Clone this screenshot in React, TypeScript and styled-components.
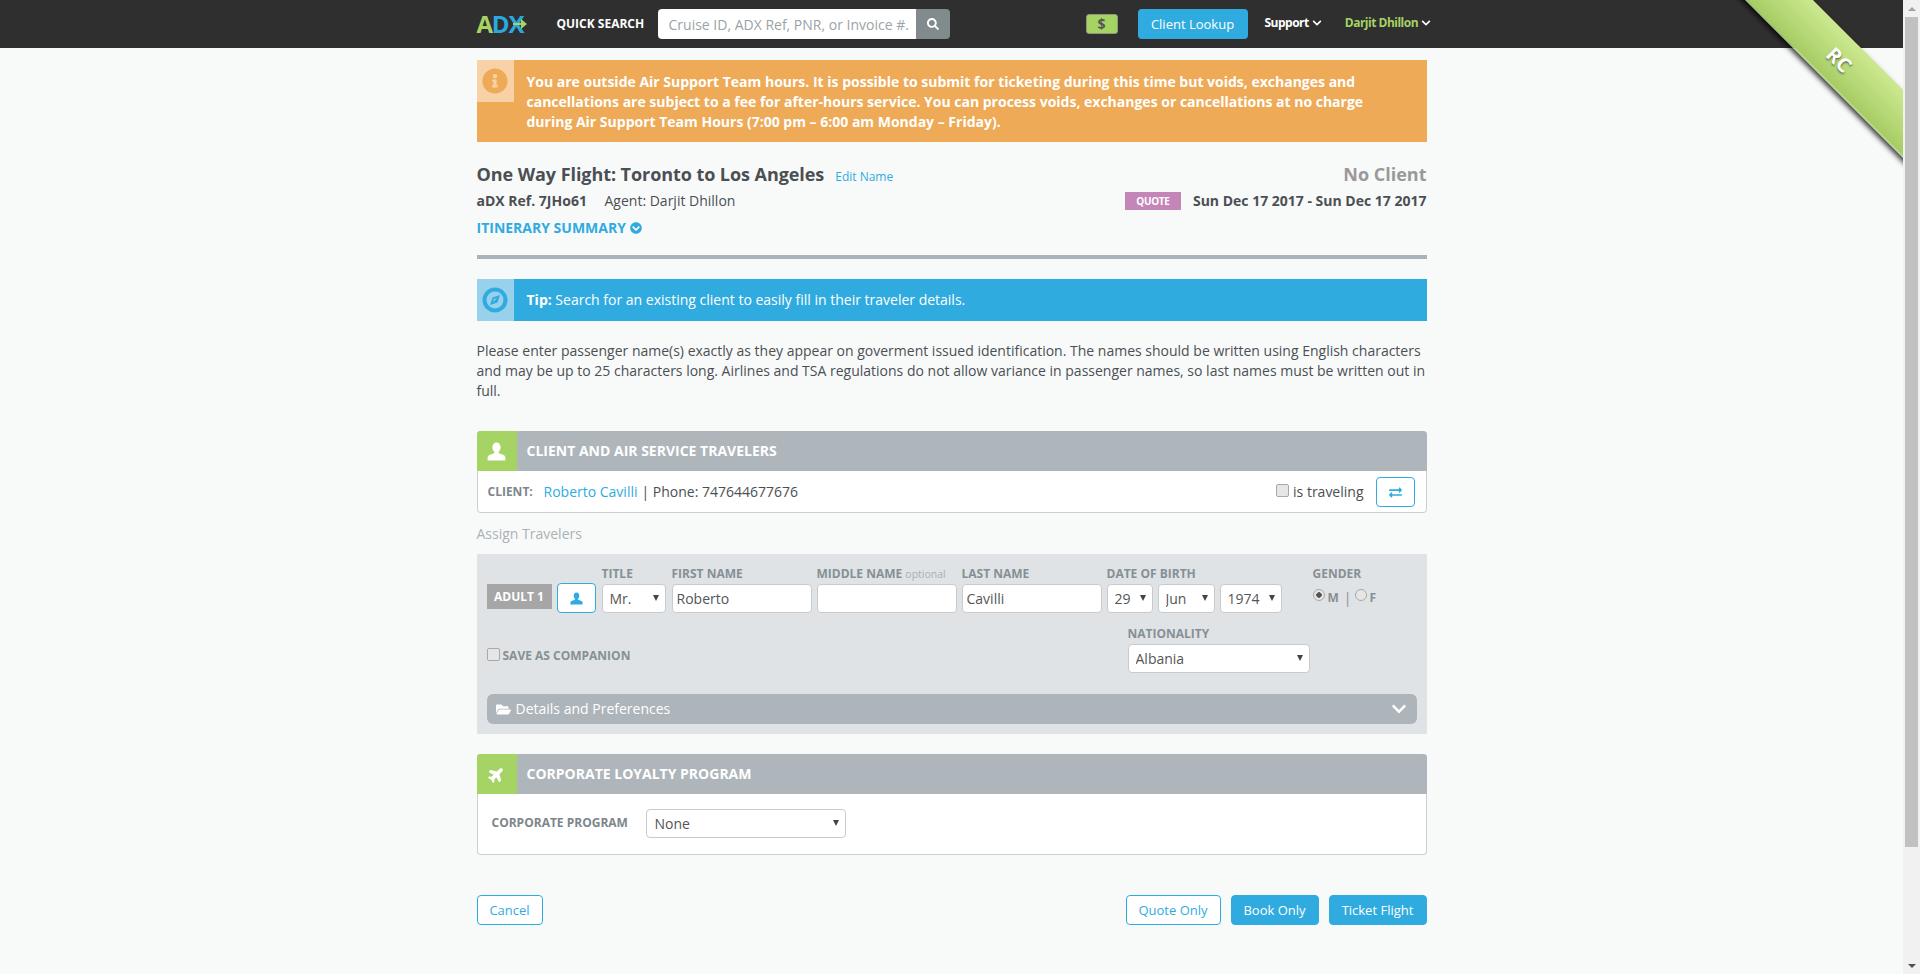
import { FC, ReactNode } from "react";
import styled, { createGlobalStyle } from "styled-components";
import {
  FaChevronCircleDown,
  FaChevronDown,
  FaExchangeAlt,
  FaFolderOpen,
  FaInfoCircle,
  FaPlane,
  FaSearch,
} from "react-icons/fa";

const BLUE = "#2fabdf";
const GREEN = "#a5d364";

const GlobalStyle = createGlobalStyle`
  html, body {
    margin: 0;
    padding: 0;
    height: 100%;
    overflow: hidden;
  }
  body {
    background: #f8fafa;
    color: #4b4f54;
    font-family: "Open Sans", "Liberation Sans", sans-serif;
    font-size: 14px;
    line-height: 20px;
  }
`;

const Shell = styled.div`
  display: flex;
  height: 974px;
  overflow: hidden;
`;

const Page = styled.div`
  position: relative;
  flex: 1;
  min-width: 0;
  overflow: hidden;
`;

const ScrollRail = styled.div`
  flex: 0 0 17px;
  display: flex;
  flex-direction: column;
  background: #f1f1f1;
`;

const ScrollArrow = styled.div<{ $down?: boolean }>`
  flex: 0 0 17px;
  display: flex;
  align-items: center;
  justify-content: center;

  &::before {
    content: "";
    border-left: 4px solid transparent;
    border-right: 4px solid transparent;
    ${(p) => (p.$down ? "border-top: 4px solid #505050;" : "border-bottom: 4px solid #a3a3a3;")}
  }
`;

const ScrollThumb = styled.div`
  flex: 0 0 830px;
  margin: 0 2px;
  background: #c1c1c1;
`;

const ScrollSpace = styled.div`
  flex: 1;
`;

const TopBar = styled.header`
  background: #2f2f2f;
  height: 48px;
`;

const Container = styled.div`
  width: 950px;
  margin: 0 auto;
`;

const TopBarInner = styled(Container)`
  display: flex;
  align-items: center;
  height: 48px;
`;

const Logo = styled.div`
  position: relative;
  flex: 0 0 80px;
  font-size: 24px;
  font-weight: 700;
  letter-spacing: -1.2px;
  line-height: 48px;
  color: #2aa9e0;

  span {
    color: ${GREEN};
  }
  svg {
    position: absolute;
    left: 36px;
    top: 18px;
  }
`;

const QuickLabel = styled.div`
  flex: 0 0 101px;
  color: #fff;
  font-size: 12px;
  font-weight: 700;
  white-space: nowrap;
`;

const SearchGroup = styled.div`
  display: flex;
  flex: 0 0 292px;
  height: 30px;
`;

const SearchInput = styled.input`
  flex: 1;
  min-width: 0;
  border: 0;
  border-radius: 4px 0 0 4px;
  background: #fff;
  padding: 0 0 0 11px;
  font: 14px "Open Sans", sans-serif;
  color: #555;

  &::placeholder {
    color: #9aa3a8;
    opacity: 1;
  }
`;

const SearchButton = styled.button`
  flex: 0 0 34px;
  border: 0;
  padding: 0;
  border-radius: 0 4px 4px 0;
  background: #818b8e;
  color: #fff;
  font-size: 12px;
  display: flex;
  align-items: center;
  justify-content: center;
`;

const MoneyBadge = styled.div`
  flex: 0 0 32px;
  margin-left: 136px;
  height: 20px;
  box-sizing: border-box;
  border: 1px solid #8b9a78;
  border-radius: 3px;
  background: ${GREEN};
  color: #555;
  font-size: 14px;
  font-weight: 700;
  line-height: 18px;
  text-align: center;
`;

const LookupButton = styled.button`
  flex: 0 0 110px;
  margin-left: 20px;
  height: 30px;
  border: 0;
  border-radius: 4px;
  padding: 0;
  background: ${BLUE};
  color: #fff;
  font: 13px "Open Sans", sans-serif;
`;

const NavMenu = styled.div<{ $color: string; $gap: number }>`
  display: flex;
  align-items: center;
  flex: none;
  margin-left: ${(p) => p.$gap}px;
  margin-top: -2px;
  color: ${(p) => p.$color};
  font-size: 12px;
  font-weight: 700;
  letter-spacing: -0.5px;
  white-space: nowrap;

  svg {
    color: #fff;
    font-size: 10px;
    margin-left: 3px;
  }
`;

const Ribbon = styled.div`
  position: absolute;
  top: 0;
  right: 0;
  width: 175px;
  height: 175px;
  overflow: hidden;
  pointer-events: none;
`;

const RibbonBand = styled.div`
  position: absolute;
  left: -39px;
  top: 36px;
  width: 300px;
  height: 48px;
  box-sizing: border-box;
  transform: rotate(45deg);
  background: linear-gradient(to bottom, #cde990, #a6cc64);
  border-bottom: 1px solid #bcdca0;
  box-shadow: 0 3px 5px rgba(0, 0, 0, 0.75);
  color: #fff;
  font-size: 20px;
  font-weight: 700;
  line-height: 48px;
  text-align: center;
  text-shadow: 1px 1px 2px rgba(0, 0, 0, 0.5);
`;

const Notice = styled.div<{ $bg: string }>`
  display: flex;
  background: ${(p) => p.$bg};
  color: #fff;
`;

const NoticeIcon = styled.div<{ $bg: string; $color: string; $size: number }>`
  flex: 0 0 37px;
  height: 42px;
  display: flex;
  align-items: center;
  justify-content: center;
  background: ${(p) => p.$bg};
  color: ${(p) => p.$color};
  font-size: ${(p) => p.$size}px;
`;

const AlertText = styled.div`
  padding: 12px 40px 10px 13px;
  font-weight: 700;
`;

const TipText = styled.div`
  padding: 11px 13px;

  b {
    font-weight: 700;
  }
`;

const Alert = styled(Notice)`
  margin-top: 12px;
`;

const Tip = styled(Notice)`
  margin-top: 20px;
`;

const TripHead = styled.div`
  display: flex;
  justify-content: space-between;
  margin-top: 20px;
`;

const TripTitle = styled.div`
  display: flex;
  align-items: baseline;
`;

const TitleText = styled.div`
  font-size: 18px;
  font-weight: 700;
  letter-spacing: -0.065px;
  line-height: 24px;
`;

const EditLink = styled.a`
  margin-left: 11px;
  font-size: 12px;
  color: ${BLUE};
`;

const NoClient = styled.div`
  font-size: 18px;
  font-weight: 700;
  line-height: 24px;
  color: #999;
`;

const TripMeta = styled.div`
  display: flex;
  justify-content: space-between;
  align-items: center;
  margin-top: 4px;
`;

const RefGroup = styled.div`
  display: flex;

  b {
    font-weight: 700;
    width: 128px;
  }
`;

const DateGroup = styled.div`
  display: flex;
  align-items: center;
  font-weight: 700;
`;

const StatusTag = styled.span`
  width: 56px;
  height: 18px;
  margin-right: 12px;
  background: #c485b7;
  color: #fff;
  font-size: 10px;
  font-weight: 700;
  line-height: 18px;
  letter-spacing: -0.3px;
  text-align: center;
`;

const SummaryLink = styled.a`
  display: flex;
  align-items: center;
  gap: 4px;
  margin-top: 7px;
  color: ${BLUE};
  font-weight: 700;
  line-height: 20px;

  svg {
    font-size: 12px;
  }
`;

const Rule = styled.div`
  height: 4px;
  margin-top: 17px;
  background: #aab3b8;
`;

const Intro = styled.p`
  margin: 20px 0 30px;
`;

const Panel = styled.section`
  background: #fff;
  border: 1px solid #ccd0d3;
  border-top: 0;
  border-radius: 4px;
`;

const PanelHead = styled.div`
  display: flex;
  align-items: center;
  height: 40px;
  margin: 0 -1px;
  background: #aeb5bb;
  border-radius: 4px 4px 0 0;
  color: #fff;
  font-weight: 700;
  overflow: hidden;
`;

const PanelIcon = styled.div`
  flex: 0 0 40px;
  height: 40px;
  margin-right: 10px;
  display: flex;
  align-items: center;
  justify-content: center;
  background: ${GREEN};
  font-size: 17px;
`;

const PlaneIcon = styled(FaPlane)`
  transform: rotate(-45deg);
`;

const ClientRow = styled.div`
  display: flex;
  align-items: center;
  height: 41px;
  box-sizing: border-box;
  padding: 1px 11px 0 10px;
`;

const ClientLabel = styled.span`
  width: 56px;
  color: #7d868b;
  font-size: 12px;
  font-weight: 700;
`;

const BlueLink = styled.a`
  color: ${BLUE};
  margin-right: 4px;
`;

const Spacer = styled.div`
  flex: 1;
`;

const Check = styled.input`
  appearance: none;
  flex: none;
  width: 13px;
  height: 13px;
  margin: 0;
  box-sizing: border-box;
  border: 1px solid #a9a9a9;
  border-radius: 2px;
  background: #e6e6e6;
`;

const TravelingLabel = styled.label`
  display: flex;
  align-items: center;
  gap: 4px;
  margin-right: 12px;

  input {
    margin-top: -3px;
  }
`;

const OutlineIconButton = styled.button`
  flex: 0 0 39px;
  height: 30px;
  padding: 0;
  box-sizing: border-box;
  border: 1px solid ${BLUE};
  border-radius: 4px;
  background: #fff;
  color: ${BLUE};
  font-size: 13px;
  display: flex;
  align-items: center;
  justify-content: center;
`;

const AssignTitle = styled.div`
  margin: 11px 0 10px;
  color: #aab1b6;
`;

const TravelerForm = styled.div`
  background: #dfe3e6;
  padding: 11px 10px 10px;
`;

const FieldRow = styled.div`
  display: flex;
  align-items: flex-end;
`;

const AdultTag = styled.div`
  flex: 0 0 65px;
  height: 25px;
  margin: 0 5px 4px 0;
  background: #a6a6a6;
  color: #fff;
  font-size: 12px;
  font-weight: 700;
  line-height: 25px;
  text-align: center;
`;

const ProfileButton = styled(OutlineIconButton)`
  margin-right: 6px;
`;

const Field = styled.div<{ $width: number; $gap?: number }>`
  flex: 0 0 ${(p) => p.$width}px;
  min-width: 0;
  margin-right: ${(p) => p.$gap ?? 5}px;
`;

const FieldLabel = styled.div`
  height: 19px;
  color: #869094;
  font-size: 12px;
  font-weight: 700;
  line-height: 18px;
  white-space: nowrap;

  small {
    color: #a9b0b4;
    font-size: 10.5px;
    font-weight: 400;
  }
`;

const TextInput = styled.input`
  display: block;
  width: 100%;
  height: 29px;
  box-sizing: border-box;
  border: 1px solid #c8cbcd;
  border-radius: 4px;
  background: #fff;
  padding: 0 4px;
  color: #555;
  font: 14px "Open Sans", sans-serif;
`;

const SelectWrap = styled.div`
  position: relative;

  &::after {
    content: "";
    position: absolute;
    right: 7px;
    top: 11px;
    border-left: 3.5px solid transparent;
    border-right: 3.5px solid transparent;
    border-top: 6px solid #444;
    pointer-events: none;
  }
`;

const SelectBox = styled.select`
  appearance: none;
  display: block;
  width: 100%;
  height: 29px;
  box-sizing: border-box;
  border: 1px solid #c8cbcd;
  border-radius: 4px;
  background: #fff;
  padding: 0 0 0 7px;
  color: #555;
  font: 14px "Open Sans", sans-serif;
`;

const Dropdown: FC<{ value: string }> = ({ value }) => (
  <SelectWrap>
    <SelectBox defaultValue={value}>
      <option>{value}</option>
    </SelectBox>
  </SelectWrap>
);

const GenderRow = styled.div`
  display: flex;
  align-items: center;
  height: 29px;
  margin-top: -1px;
  color: #869094;
  font-size: 12px;
  font-weight: 700;

  i {
    font-style: normal;
    font-weight: 400;
    font-size: 14px;
    margin: 0 3px 0 5px;
  }
`;

const Radio = styled.input`
  appearance: none;
  width: 12px;
  height: 12px;
  margin: -5px 3px 0 0;
  box-sizing: border-box;
  border: 1px solid #a9a9a9;
  border-radius: 50%;
  background: #e6e6e6;

  &:checked {
    background: radial-gradient(circle, #555 0 2.5px, #e6e6e6 3px);
  }
`;

const GenderField = styled(Field)`
  align-self: flex-start;
`;

const ExtrasRow = styled.div`
  display: flex;
  justify-content: space-between;
  margin-top: 12px;
  padding-right: 107px;
`;

const CompanionLabel = styled.label`
  display: flex;
  align-items: center;
  gap: 3px;
  margin-top: 21px;
  height: 20px;
  color: #869094;
  font-size: 12px;
  font-weight: 700;

  input {
    margin-top: -3px;
  }
`;

const DetailsBar = styled.div`
  display: flex;
  align-items: center;
  gap: 5px;
  height: 30px;
  margin-top: 21px;
  padding: 0 10px 0 9px;
  border-radius: 6px;
  background: #adb4ba;
  color: #fff;

  svg:first-child {
    font-size: 15px;
  }
  svg:last-child {
    margin-left: auto;
    font-size: 16px;
  }
`;

const CorporatePanel = styled(Panel)`
  margin-top: 20px;
`;

const CorporateRow = styled.div`
  display: flex;
  align-items: center;
  padding: 15px 15px 16px 14px;
`;

const CorporateLabel = styled.div`
  flex: 0 0 154px;
  margin-top: -2px;
  color: #7d868b;
  font-size: 12px;
  font-weight: 700;
`;

const CorporateField = styled.div`
  flex: 0 0 200px;

  select {
    padding-left: 8px;
  }
`;

const Actions = styled.div`
  display: flex;
  gap: 10px;
  margin-top: 40px;
`;

const ActionButton = styled.button<{ $solid?: boolean; $width: number }>`
  flex: 0 0 ${(p) => p.$width}px;
  height: 30px;
  box-sizing: border-box;
  padding: 0;
  border: 1px solid ${BLUE};
  border-radius: 4px;
  background: ${(p) => (p.$solid ? BLUE : "#fff")};
  color: ${(p) => (p.$solid ? "#fff" : BLUE)};
  font: 13px "Open Sans", sans-serif;
`;

const UserGlyph: FC<{ size: number }> = ({ size }) => (
  <svg width={size} height={size} viewBox="0 0 16 15" fill="currentColor">
    <path d="M8 0C5.8 0 4.5 1.8 4.5 4c0 1.6.7 3 1.6 3.8.3.3.2.9-.3 1.1L2 10.5c-1 .5-1.5 1.2-1.5 2.5v2h15v-2c0-1.3-.5-2-1.5-2.5L10.200 8.900c-.5-.2-.6-.8-.3-1.100.9-.8 1.600-2.200 1.600-3.800C11.500 1.800 10.200 0 8 0z" />
  </svg>
);

const CompassGlyph: FC = () => (
  <svg width="26" height="26" viewBox="0 0 26 26">
    <circle cx="13" cy="13" r="10.500" fill="none" stroke={BLUE} strokeWidth="4" />
    <path d="M8 18l2.500-7.500L18 8l-2.500 7.500z" fill={BLUE} />
    <path d="M11 15l1-3 3-1z" fill="#97d1ec" />
  </svg>
);

const SectionHead: FC<{ icon: ReactNode; title: string }> = ({ icon, title }) => (
  <PanelHead>
    <PanelIcon>{icon}</PanelIcon>
    {title}
  </PanelHead>
);

const App: FC = () => {
  return (
    <Shell>
      <GlobalStyle />
      <Page>
        <TopBar>
          <TopBarInner>
            <Logo>
              <span>A</span>DX
              <svg width="14" height="12" viewBox="0 0 14 12">
                <path d="M0 5h8V1l6 5-6 5V7H0z" fill={GREEN} />
              </svg>
            </Logo>
            <QuickLabel>QUICK SEARCH</QuickLabel>
            <SearchGroup>
              <SearchInput placeholder="Cruise ID, ADX Ref, PNR, or Invoice #." />
              <SearchButton>
                <FaSearch />
              </SearchButton>
            </SearchGroup>
            <MoneyBadge>$</MoneyBadge>
            <LookupButton>Client Lookup</LookupButton>
            <NavMenu $color="#fff" $gap={17}>
              Support <FaChevronDown />
            </NavMenu>
            <NavMenu $color={GREEN} $gap={23}>
              Darjit Dhillon <FaChevronDown />
            </NavMenu>
          </TopBarInner>
        </TopBar>

        <Ribbon>
          <RibbonBand>RC</RibbonBand>
        </Ribbon>

        <Container>
          <Alert $bg="#eeaa57">
            <NoticeIcon $bg="#f8d2a6" $color="#eeaa57" $size={26}>
              <FaInfoCircle />
            </NoticeIcon>
            <AlertText>
              You are outside Air Support Team hours. It is possible to submit for ticketing during this time but voids, exchanges and cancellations are subject to a fee for after-hours service. You can process voids, exchanges or cancellations at no charge during Air Support Team Hours (7:00 pm – 6:00 am Monday – Friday).
            </AlertText>
          </Alert>

          <TripHead>
            <TripTitle>
              <TitleText>One Way Flight: Toronto to Los Angeles</TitleText>
              <EditLink>Edit Name</EditLink>
            </TripTitle>
            <NoClient>No Client</NoClient>
          </TripHead>
          <TripMeta>
            <RefGroup>
              <b>aDX Ref. 7JHo61</b>
              <span>Agent: Darjit Dhillon</span>
            </RefGroup>
            <DateGroup>
              <StatusTag>QUOTE</StatusTag>
              Sun Dec 17 2017 - Sun Dec 17 2017
            </DateGroup>
          </TripMeta>
          <SummaryLink>
            ITINERARY SUMMARY <FaChevronCircleDown />
          </SummaryLink>
          <Rule />

          <Tip $bg={BLUE}>
            <NoticeIcon $bg="#97d1ec" $color={BLUE} $size={26}>
              <CompassGlyph />
            </NoticeIcon>
            <TipText>
              <b>Tip:</b> Search for an existing client to easily fill in their traveler details.
            </TipText>
          </Tip>

          <Intro>
            Please enter passenger name(s) exactly as they appear on goverment issued identification. The names should be written using English characters and may be up to 25 characters long. Airlines and TSA regulations do not allow variance in passenger names, so last names must be written out in full.
          </Intro>

          <Panel>
            <SectionHead icon={<UserGlyph size={19} />} title="CLIENT AND AIR SERVICE TRAVELERS" />
            <ClientRow>
              <ClientLabel>CLIENT:</ClientLabel>
              <BlueLink>Roberto Cavilli</BlueLink>
              | Phone: 747644677676
              <Spacer />
              <TravelingLabel>
                <Check type="checkbox" /> is traveling
              </TravelingLabel>
              <OutlineIconButton>
                <FaExchangeAlt />
              </OutlineIconButton>
            </ClientRow>
          </Panel>

          <AssignTitle>Assign Travelers</AssignTitle>

          <TravelerForm>
            <FieldRow>
              <AdultTag>ADULT 1</AdultTag>
              <ProfileButton>
                <UserGlyph size={13} />
              </ProfileButton>
              <Field $width={64} $gap={6}>
                <FieldLabel>TITLE</FieldLabel>
                <Dropdown value="Mr." />
              </Field>
              <Field $width={140}>
                <FieldLabel>FIRST NAME</FieldLabel>
                <TextInput defaultValue="Roberto" />
              </Field>
              <Field $width={140}>
                <FieldLabel>
                  MIDDLE NAME <small>optional</small>
                </FieldLabel>
                <TextInput />
              </Field>
              <Field $width={140}>
                <FieldLabel>LAST NAME</FieldLabel>
                <TextInput defaultValue="Cavilli" />
              </Field>
              <Field $width={46}>
                <FieldLabel>DATE OF BIRTH</FieldLabel>
                <Dropdown value="29" />
              </Field>
              <Field $width={57}>
                <FieldLabel>&nbsp;</FieldLabel>
                <Dropdown value="Jun" />
              </Field>
              <Field $width={62} $gap={31}>
                <FieldLabel>&nbsp;</FieldLabel>
                <Dropdown value="1974" />
              </Field>
              <GenderField $width={80} $gap={0}>
                <FieldLabel>GENDER</FieldLabel>
                <GenderRow>
                  <Radio type="radio" name="gender" defaultChecked /> M <i>|</i>
                  <Radio type="radio" name="gender" /> F
                </GenderRow>
              </GenderField>
            </FieldRow>
            <ExtrasRow>
              <CompanionLabel>
                <Check type="checkbox" /> SAVE AS COMPANION
              </CompanionLabel>
              <Field $width={182} $gap={0}>
                <FieldLabel>NATIONALITY</FieldLabel>
                <Dropdown value="Albania" />
              </Field>
            </ExtrasRow>
            <DetailsBar>
              <FaFolderOpen /> Details and Preferences
              <FaChevronDown />
            </DetailsBar>
          </TravelerForm>

          <CorporatePanel>
            <SectionHead icon={<PlaneIcon />} title="CORPORATE LOYALTY PROGRAM" />
            <CorporateRow>
              <CorporateLabel>CORPORATE PROGRAM</CorporateLabel>
              <CorporateField>
                <Dropdown value="None" />
              </CorporateField>
            </CorporateRow>
          </CorporatePanel>

          <Actions>
            <ActionButton $width={66}>Cancel</ActionButton>
            <Spacer />
            <ActionButton $width={95}>Quote Only</ActionButton>
            <ActionButton $width={88} $solid>Book Only</ActionButton>
            <ActionButton $width={98} $solid>Ticket Flight</ActionButton>
          </Actions>
        </Container>
      </Page>
      <ScrollRail>
        <ScrollArrow />
        <ScrollThumb />
        <ScrollSpace />
        <ScrollArrow $down />
      </ScrollRail>
    </Shell>
  );
};

export default App;
